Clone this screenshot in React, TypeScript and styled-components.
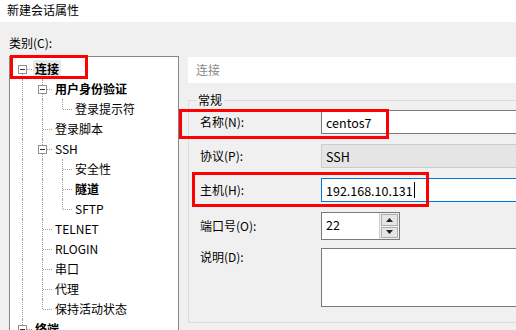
import React from 'react';
import styled, { createGlobalStyle } from 'styled-components';

const GlobalStyle = createGlobalStyle`
  html, body {
    margin: 0;
    padding: 0;
    background: #f0f0f0;
  }
  body {
    font-family: "Noto Sans CJK SC", "Liberation Sans", sans-serif;
    font-size: 12px;
    color: #000;
  }
`;

interface TreeItem {
  label: string;
  level: number;
  guides: boolean[];
  top: boolean;
  bottom: boolean;
  expander?: boolean;
  bold?: boolean;
  selected?: boolean;
}

const treeItems: TreeItem[] = [
  { label: '连接', level: 0, guides: [], top: false, bottom: true, expander: true, bold: true, selected: true },
  { label: '用户身份验证', level: 1, guides: [true], top: true, bottom: true, expander: true, bold: true },
  { label: '登录提示符', level: 2, guides: [true, true], top: true, bottom: false },
  { label: '登录脚本', level: 1, guides: [true], top: true, bottom: true },
  { label: 'SSH', level: 1, guides: [true], top: true, bottom: true, expander: true },
  { label: '安全性', level: 2, guides: [true, true], top: true, bottom: true },
  { label: '隧道', level: 2, guides: [true, true], top: true, bottom: true, bold: true },
  { label: 'SFTP', level: 2, guides: [true, true], top: true, bottom: false },
  { label: 'TELNET', level: 1, guides: [true], top: true, bottom: true },
  { label: 'RLOGIN', level: 1, guides: [true], top: true, bottom: true },
  { label: '串口', level: 1, guides: [true], top: true, bottom: true },
  { label: '代理', level: 1, guides: [true], top: true, bottom: true },
  { label: '保持活动状态', level: 1, guides: [true], top: true, bottom: false },
  { label: '终端', level: 0, guides: [], top: true, bottom: false, expander: true, bold: true },
];

const App: React.FC = () => {
  return (
    <Window>
      <GlobalStyle />
      <TitleBar>新建会话属性</TitleBar>
      <Body>
        <LeftColumn>
          <CategoryLabel>类别(C):</CategoryLabel>
          <Tree>
            {treeItems.map((item) => (
              <TreeRow key={item.label}>
                {item.guides.map((pass, i) => (
                  <GuideCell key={i} $pass={pass} />
                ))}
                <ConnectorCell $top={item.top} $bottom={item.bottom}>
                  {item.expander && <Expander />}
                </ConnectorCell>
                <TreeLabel $bold={item.bold} $selected={item.selected}>
                  {item.label}
                </TreeLabel>
              </TreeRow>
            ))}
          </Tree>
        </LeftColumn>
        <RightColumn>
          <PageHeader>连接</PageHeader>
          <GroupBox>
            <GroupLegend>常规</GroupLegend>
            <FieldGrid>
              <FieldLabel>名称(N):</FieldLabel>
              <TextBox>centos7</TextBox>
              <FieldLabel>协议(P):</FieldLabel>
              <TextBox $disabled>SSH</TextBox>
              <FieldLabel>主机(H):</FieldLabel>
              <TextBox $focused>
                192.168.10.131
                <Caret />
              </TextBox>
              <FieldLabel>端口号(O):</FieldLabel>
              <SpinBox>
                <SpinText>22</SpinText>
                <SpinButtons>
                  <SpinButton>
                    <svg width="7" height="4" viewBox="0 0 7 4">
                      <path d="M0 4 L3.5 0 L7 4 Z" fill="#222" />
                    </svg>
                  </SpinButton>
                  <SpinButton>
                    <svg width="7" height="4" viewBox="0 0 7 4">
                      <path d="M0 0 L3.5 4 L7 0 Z" fill="#222" />
                    </svg>
                  </SpinButton>
                </SpinButtons>
              </SpinBox>
              <FieldLabel $top>说明(D):</FieldLabel>
              <TextArea />
            </FieldGrid>
          </GroupBox>
        </RightColumn>
      </Body>
      <Highlight style={{ left: 10, top: 55, width: 78, height: 24 }} />
      <Highlight style={{ left: 179, top: 109, width: 210, height: 30 }} />
      <Highlight style={{ left: 192, top: 172, width: 237, height: 35 }} />
    </Window>
  );
};

const Window = styled.div`
  position: relative;
  width: 516px;
  height: 330px;
  overflow: hidden;
  background: #f0f0f0;
`;

const TitleBar = styled.div`
  height: 22px;
  line-height: 20px;
  padding-left: 7px;
  background: #ffffff;
  color: #000;
`;

const Body = styled.div`
  display: flex;
  gap: 9px;
  padding-left: 9px;
`;

const LeftColumn = styled.div`
  width: 170px;
  flex-shrink: 0;
  display: flex;
  flex-direction: column;
`;

const CategoryLabel = styled.div`
  height: 34px;
  box-sizing: border-box;
  padding-top: 12px;
  line-height: 18px;
`;

const Tree = styled.div`
  height: 300px;
  border: 1px solid #828790;
  background: #ffffff;
  padding: 2px 0 0 2px;
`;

const TreeRow = styled.div`
  display: flex;
  align-items: center;
  height: 20px;
`;

const GuideCell = styled.div<{ $pass: boolean }>`
  position: relative;
  width: 20px;
  height: 20px;
  flex-shrink: 0;
  &::before {
    content: '';
    display: ${(p) => (p.$pass ? 'block' : 'none')};
    position: absolute;
    left: 10px;
    top: 0;
    bottom: 0;
    border-left: 1px dotted #a0a0a0;
  }
`;

const ConnectorCell = styled.div<{ $top: boolean; $bottom: boolean }>`
  position: relative;
  width: 20px;
  height: 20px;
  flex-shrink: 0;
  &::before {
    content: '';
    position: absolute;
    left: 10px;
    top: ${(p) => (p.$top ? '0' : '10px')};
    bottom: ${(p) => (p.$bottom ? '0' : '10px')};
    border-left: 1px dotted #a0a0a0;
  }
  &::after {
    content: '';
    position: absolute;
    left: 11px;
    right: 0;
    top: 10px;
    border-top: 1px dotted #a0a0a0;
  }
`;

const Expander = styled.div`
  position: absolute;
  left: 6px;
  top: 6px;
  width: 7px;
  height: 7px;
  border: 1px solid #919191;
  background: #ffffff;
  z-index: 1;
  &::after {
    content: '';
    position: absolute;
    left: 1px;
    top: 3px;
    width: 5px;
    height: 1px;
    background: #333;
  }
`;

const TreeLabel = styled.span<{ $bold?: boolean; $selected?: boolean }>`
  padding: 0 2px;
  margin-left: 1px;
  line-height: 18px;
  white-space: nowrap;
  font-weight: ${(p) => (p.$bold ? 700 : 400)};
  background: ${(p) => (p.$selected ? '#e9e9e9' : 'transparent')};
`;

const RightColumn = styled.div`
  width: 360px;
  flex-shrink: 0;
  display: flex;
  flex-direction: column;
`;

const PageHeader = styled.div`
  margin-top: 35px;
  height: 26px;
  line-height: 26px;
  padding-left: 8px;
  background: #ffffff;
  color: #8a8a8a;
`;

const GroupBox = styled.fieldset`
  margin: 9px 0 0 0;
  padding: 2px 0 13px 0;
  border: 1px solid #dcdcdc;
  min-width: 0;
`;

const GroupLegend = styled.legend`
  margin-left: 7px;
  padding: 0 2px;
  line-height: 16px;
`;

const FieldGrid = styled.div`
  display: grid;
  grid-template-columns: 121px 1fr;
  grid-template-rows: 24px 24px 24px 28px 59px;
  row-gap: 10px;
  align-items: center;
  padding-left: 11px;
`;

const FieldLabel = styled.div<{ $top?: boolean }>`
  align-self: ${(p) => (p.$top ? 'start' : 'center')};
  margin-top: ${(p) => (p.$top ? '-2px' : '0')};
  line-height: 18px;
`;

const TextBox = styled.div<{ $disabled?: boolean; $focused?: boolean }>`
  height: 24px;
  box-sizing: border-box;
  display: flex;
  align-items: center;
  padding-left: 4px;
  border: 1px solid
    ${(p) => (p.$focused ? '#0078d7' : p.$disabled ? '#cccccc' : '#7a7a7a')};
  background: ${(p) => (p.$disabled ? '#e5e5e5' : '#ffffff')};
  font-size: 12.5px;
  white-space: nowrap;
`;

const Caret = styled.span`
  display: inline-block;
  width: 0;
  height: 16px;
  margin-left: 1px;
  border-left: 1px solid #000;
`;

const SpinBox = styled.div`
  width: 79px;
  height: 28px;
  box-sizing: border-box;
  display: flex;
  border: 1px solid #7a7a7a;
  background: #ffffff;
`;

const SpinText = styled.div`
  flex: 1;
  padding-left: 4px;
  line-height: 24px;
  font-size: 12.5px;
`;

const SpinButtons = styled.div`
  width: 17px;
  display: flex;
  flex-direction: column;
  gap: 1px;
  padding: 1px;
  background: #f0f0f0;
  border-left: 1px solid #cfcfcf;
`;

const SpinButton = styled.div`
  flex: 1;
  display: flex;
  align-items: center;
  justify-content: center;
  background: #e5e5e5;
  border: 1px solid #adadad;
`;

const TextArea = styled.div`
  align-self: start;
  margin-top: -2px;
  height: 59px;
  box-sizing: border-box;
  border: 1px solid #7a7a7a;
  background: #ffffff;
`;

const Highlight = styled.div`
  position: absolute;
  box-sizing: border-box;
  border: 3px solid #ff0000;
  pointer-events: none;
`;

export default App;
